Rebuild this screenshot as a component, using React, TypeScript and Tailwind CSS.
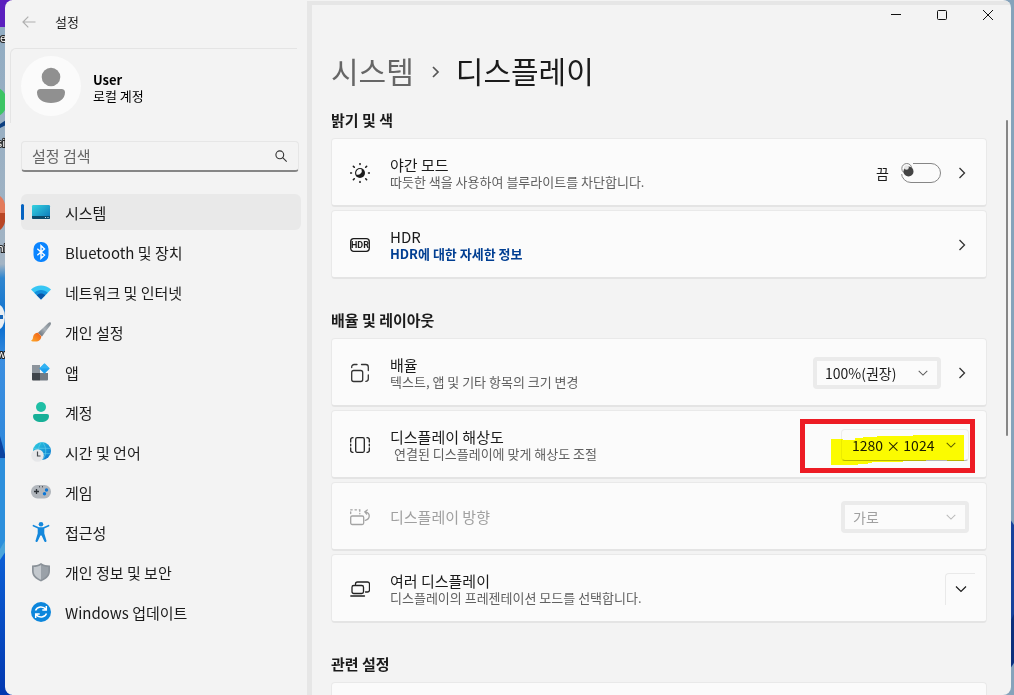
import type { ReactNode } from "react";

const navItems = [
  { id: "system", label: "시스템", icon: <SystemIcon /> },
  { id: "bluetooth", label: "Bluetooth 및 장치", icon: <BluetoothIcon /> },
  { id: "network", label: "네트워크 및 인터넷", icon: <NetworkIcon /> },
  { id: "personal", label: "개인 설정", icon: <BrushIcon /> },
  { id: "apps", label: "앱", icon: <AppsIcon /> },
  { id: "accounts", label: "계정", icon: <AccountIcon /> },
  { id: "time", label: "시간 및 언어", icon: <TimeIcon /> },
  { id: "gaming", label: "게임", icon: <GamingIcon /> },
  { id: "access", label: "접근성", icon: <AccessIcon /> },
  { id: "privacy", label: "개인 정보 및 보안", icon: <ShieldIcon /> },
  { id: "update", label: "Windows 업데이트", icon: <UpdateIcon /> },
];

function SystemIcon() {
  return (
    <svg viewBox="0 0 20 20" className="size-5">
      <defs>
        <linearGradient id="sys" x1="0" y1="0" x2="1" y2="1">
          <stop offset="0" stopColor="#35d3e0" />
          <stop offset="1" stopColor="#0b74b8" />
        </linearGradient>
      </defs>
      <rect x="1" y="3" width="18" height="14" rx="1.2" fill="url(#sys)" />
      <path d="M1 14h18v1.8a1.2 1.2 0 0 1-1.2 1.2H2.2A1.2 1.2 0 0 1 1 15.8z" fill="#0b4a6b" />
      <path d="M14 15.500h1M16.500 15.500h1" stroke="#cfe9f5" />
    </svg>
  );
}

function BluetoothIcon() {
  return (
    <svg viewBox="0 0 20 20" className="size-5">
      <rect x="2.500" y="0" width="15" height="20" rx="7" fill="#0a84ff" />
      <path d="M6.300 6.800l7.200 6.200-3.500 3.300V3.700l3.500 3.300-7.200 6.200" fill="none" stroke="#fff" strokeWidth="1.400" />
    </svg>
  );
}

function NetworkIcon() {
  return (
    <svg viewBox="0 0 20 20" className="size-5">
      <path d="M0 7.500C5.500 2 14.500 2 20 7.500L10 17.500z" fill="#37c6f4" />
      <path d="M3.300 10.800c3.700-3.700 9.700-3.700 13.400 0L10 17.500z" fill="#1391dd" />
      <path d="M5.800 13.300c2.300-2.300 6.100-2.300 8.400 0L10 17.500z" fill="#0a57a8" />
    </svg>
  );
}

function BrushIcon() {
  return (
    <svg viewBox="0 0 20 20" className="size-5">
      <defs>
        <linearGradient id="handle" x1="1" y1="0" x2="0" y2="1">
          <stop offset="0" stopColor="#7d868e" />
          <stop offset="0.500" stopColor="#a9b1b8" />
          <stop offset="1" stopColor="#5d656d" />
        </linearGradient>
        <linearGradient id="bristle" x1="0" y1="1" x2="1" y2="0">
          <stop offset="0" stopColor="#ffa928" />
          <stop offset="1" stopColor="#ee5a17" />
        </linearGradient>
      </defs>
      <path d="M19.600 0.500c.7.800.3 2-.4 3L11 14.500 7 10.800l10-9.500c.9-.8 1.900-1.400 2.600-.8z" fill="url(#handle)" />
      <path d="M7 10.800l3.300 3.400c.1 3-2.300 5.400-5.800 5.400-2 0-3.500-.2-4.500-.9 2.200-.8 1.700-2.500 2.300-4.600.6-2 2.500-3.500 4.700-3.300z" fill="url(#bristle)" />
    </svg>
  );
}

function AppsIcon() {
  return (
    <svg viewBox="0 0 20 20" className="size-5">
      <path d="M1 3h8v8H1z" fill="#8c949c" />
      <path d="M1 11h8v7.500H2a1 1 0 0 1-1-1z" fill="#3e444a" />
      <path d="M9 11h8v6.500a1 1 0 0 1-1 1H9z" fill="#737b83" />
      <rect x="9.700" y="2.700" width="7.600" height="7.600" rx="0.800" transform="rotate(45 13.500 6.500)" fill="#1ea1ee" />
      <path d="M13.500 1.200L8.300 6.500h10.400z" fill="#3fc0f7" opacity="0.600" />
    </svg>
  );
}

function AccountIcon() {
  return (
    <svg viewBox="0 0 20 20" className="size-5">
      <circle cx="10" cy="5" r="5" fill="#1fbfa5" />
      <path d="M4 12h12a2 2 0 0 1 2 2c0 4-3.500 6-8 6s-8-2-8-6a2 2 0 0 1 2-2z" fill="#17b098" />
    </svg>
  );
}

function TimeIcon() {
  return (
    <svg viewBox="0 0 20 20" className="size-5">
      <defs>
        <linearGradient id="globe" x1="0" y1="0" x2="1" y2="1">
          <stop offset="0" stopColor="#2fd0e0" />
          <stop offset="1" stopColor="#0a6fd0" />
        </linearGradient>
      </defs>
      <circle cx="11" cy="9" r="9" fill="url(#globe)" />
      <path d="M2.500 6.300h17M3 11.700h16.500M11 0c-5 4-5 14 0 18M11 0c5 4 5 14 0 18" fill="none" stroke="#5ccdea" strokeWidth="0.700" />
      <circle cx="6.500" cy="13.500" r="6.300" fill="#e6e7e9" />
      <path d="M6.500 9.500v4.500h3" fill="none" stroke="#43484d" strokeWidth="1.200" />
    </svg>
  );
}

function GamingIcon() {
  return (
    <svg viewBox="0 0 20 20" className="size-5">
      <rect x="0" y="3" width="20" height="13.500" rx="6.500" fill="#b1b6bc" />
      <path d="M5.500 7v5M3 9.500h5" stroke="#2b3036" strokeWidth="1.300" />
      <circle cx="15.500" cy="8" r="1.700" fill="#0b76d6" />
      <circle cx="13.500" cy="11.800" r="1.700" fill="#0b76d6" />
      <path d="M8 4.800h1M11 4.800h1" stroke="#2b3036" />
    </svg>
  );
}

function AccessIcon() {
  return (
    <svg viewBox="0 0 20 20" className="size-5" fill="#1488dc">
      <circle cx="10" cy="2.300" r="2.300" />
      <path d="M2.700 2.900l5.200 2.300h4.200l5.200-2.300c1.100-.3 1.500 1.200.5 1.700L13.300 6.600v5l2.200 7.200c.2 1.300-1.700 1.700-2.200.5L10.600 13.500h-1.200l-2.700 5.800c-.5 1.200-2.400.8-2.200-.5l2.200-7.200v-5L2.200 4.600c-1-.5-.6-2 .5-1.700z" />
    </svg>
  );
}

function ShieldIcon() {
  return (
    <svg viewBox="0 0 20 20" className="size-5">
      <path d="M10 1c2.700 1.800 5.500 2.500 9 2.500V9c0 5-3.500 8.200-9 10.500C4.500 17.200 1 14 1 9V3.500C4.500 3.500 7.300 2.800 10 1z" fill="#8b9299" />
      <path d="M10 3c2.300 1.400 4.700 2 7.300 2.100V9c0 4-2.800 6.600-7.300 8.700z" fill="#9aa1a8" />
      <path d="M10 3C7.700 4.400 5.300 5 2.700 5.100V9c0 4 2.800 6.600 7.300 8.700z" fill="#c3c8cd" />
    </svg>
  );
}

function UpdateIcon() {
  return (
    <svg viewBox="0 0 20 20" className="size-5">
      <circle cx="10" cy="10" r="10" fill="#0c86dc" />
      <path d="M4.500 8.500C6 4.500 12 3.500 15 7.500M15.300 4v4h-4M15.500 11.500c-1.500 4-7.500 5-10.500 1M4.700 16v-4h4" fill="none" stroke="#fff" strokeWidth="1.500" />
    </svg>
  );
}

function NightIcon() {
  return (
    <svg viewBox="0 0 20 20" className="size-5">
      <circle cx="10" cy="10" r="5" fill="#1b1b1b" />
      <path d="M11.500 6.300A4 4 0 0 1 6.300 11.500 4 4 0 0 1 11.500 6.300z" fill="#fbfbfb" />
      <path
        d="M10 .5v1M10 18.500v1M.5 10h1M18.500 10h1M3.400 3.400l.9.900M15.700 15.700l.9.900M3.400 16.600l.9-.9M15.700 4.300l.9-.9"
        stroke="#1b1b1b"
        strokeWidth="1.500"
        strokeLinecap="round"
      />
    </svg>
  );
}

function HdrIcon() {
  return (
    <svg viewBox="0 0 20 20" className="size-5">
      <rect x="0.700" y="3.700" width="18.600" height="12.600" rx="3" fill="none" stroke="#1b1b1b" strokeWidth="1.300" />
      <text x="10" y="13.200" textAnchor="middle" fontSize="9" fontWeight="700" fontFamily="Liberation Sans Narrow, Roboto, sans-serif" fill="#1b1b1b">
        HDR
      </text>
    </svg>
  );
}

function ScaleIcon() {
  return (
    <svg viewBox="0 0 20 20" className="size-5" fill="none" stroke="#333" strokeWidth="1.300" strokeLinecap="round">
      <rect x="1.700" y="7.500" width="11" height="11" rx="2" />
      <path d="M1.700 4.500V4a2.500 2.500 0 0 1 2.500-2.500H7M11.500 1.500h4.300A2.500 2.500 0 0 1 18.300 4v3.500M18.300 12v3.800a2.500 2.500 0 0 1-2.500 2.500" />
    </svg>
  );
}

function ResolutionIcon() {
  return (
    <svg viewBox="0 0 20 20" className="size-5" fill="none" stroke="#222" strokeWidth="1.300" strokeLinecap="round">
      <rect x="5.700" y="2.700" width="8.600" height="14.600" rx="1.500" />
      <path d="M3 2.700A2 2 0 0 0 .7 5v2M.7 9.200v1.600M.7 13v2A2 2 0 0 0 3 17.300M17 2.700A2 2 0 0 1 19.300 5v2M19.300 9.200v1.600M19.300 13v2a2 2 0 0 1-2.300 2.300" />
    </svg>
  );
}

function OrientationIcon() {
  return (
    <svg viewBox="0 0 20 20" className="size-5" fill="none" stroke="#a3a3a3" strokeWidth="1.300" strokeLinecap="round">
      <rect x="0.700" y="9" width="13" height="8.500" rx="1.500" />
      <path d="M.7 6.500V5M.7 2.800h1.500M5 2.800h1.500M9.300 2.800h.5v1.500M9.800 6.500v.3" />
      <path d="M15.300 13.300c5.200-1.300 5.200-7.300.2-8.500M17.300 3l-2.500 1.800 1.900 2.300" />
    </svg>
  );
}

function MultiDisplayIcon() {
  return (
    <svg viewBox="0 0 20 20" className="size-5" fill="none" stroke="#222" strokeWidth="1.300" strokeLinecap="round">
      <path d="M5.500 5.500V5a2 2 0 0 1 2-2h10a2 2 0 0 1 2 2v6a2 2 0 0 1-2 2h-2" />
      <rect x="2" y="6.500" width="11.500" height="8" rx="1.800" />
      <path d="M.8 17h13.700" />
    </svg>
  );
}

function ChevronRight() {
  return (
    <svg viewBox="0 0 14 14" className="size-3.5" fill="none" stroke="#333" strokeWidth="1.300">
      <path d="M4.500 2l5 5-5 5" />
    </svg>
  );
}

function ChevronDown({ className }: { className: string }) {
  return (
    <svg viewBox="0 0 14 14" className={className} fill="none" stroke="currentColor" strokeWidth="1.200">
      <path d="M2 4.500l5 5 5-5" />
    </svg>
  );
}

function Wallpaper() {
  return (
    <svg className="absolute inset-0 h-full w-full" viewBox="0 0 1014 695" preserveAspectRatio="none" aria-hidden="true">
      <defs>
        <linearGradient id="sky" x1="0" y1="0" x2="0" y2="1">
          <stop offset="0" stopColor="#8fabc2" />
          <stop offset="0.380" stopColor="#a3b4c4" />
          <stop offset="0.400" stopColor="#2f86cf" />
          <stop offset="0.470" stopColor="#0b6fd0" />
          <stop offset="0.520" stopColor="#3b8ee0" />
          <stop offset="0.700" stopColor="#2a86da" />
          <stop offset="0.780" stopColor="#0c62d8" />
          <stop offset="1" stopColor="#0238b0" />
        </linearGradient>
      </defs>
      <rect width="12" height="695" fill="url(#sky)" />
      <rect width="12" height="27" fill="#5b1fbe" />
      <ellipse cx="-6" cy="102" rx="13" ry="15" fill="#3cc564" />
      <path d="M0 124l6-4v5l-6 3z" fill="#0c3f80" />
      <path d="M0 196c4 3 6 9 6 17H0z" fill="#e37b5c" />
      <path d="M0 230c4-3 6-9 6-17H0z" fill="#b94625" />
      <ellipse cx="-3" cy="317" rx="8" ry="13" fill="#e9eef2" />
      <path d="M0 315h3v4H0z" fill="#1565b8" />
      <path d="M0 436l6 22H0z" fill="#0b43a0" />
      <path d="M0 460l6-2v84l-6 12z" fill="#2c8fdc" />
      <path d="M0 549l6-10v12l-6 9z" fill="#4aa5dc" />
      <g fontSize="11" fontFamily="Noto Sans CJK KR, sans-serif" fill="#fff" stroke="#222" strokeWidth="2" paintOrder="stroke">
        <text x="0" y="42">e</text>
        <text x="-3" y="147">si</text>
        <text x="-3" y="252">ni</text>
        <text x="-3" y="358">w</text>
      </g>
      <rect x="1000" width="14" height="695" fill="#86a3bb" />
      <path d="M1010 519l4 6v138l-4 6z" fill="#17429c" />
      <path d="M1010 622l4-8v48l-4 6z" fill="#0b2f7c" />
    </svg>
  );
}

function Sidebar() {
  return (
    <aside className="w-[302px] shrink-0">
      <div className="flex h-12 items-center gap-[19px] pb-1 pl-[17px]">
        <button type="button" aria-label="뒤로" className="text-[#b0b0b0]">
          <svg viewBox="0 0 14 14" className="size-3.5" fill="none" stroke="currentColor" strokeWidth="1.200">
            <path d="M13.500 7H1M6.300 1.700L1 7l5.300 5.300" />
          </svg>
        </button>
        <span className="text-[13px] leading-4">설정</span>
      </div>

      <div className="mr-2.5 ml-[5px] flex h-[75px] gap-3 rounded-tl-md border-t border-l border-[#e4e4e4] pt-[7px] pl-2.5">
        <svg viewBox="0 0 60 60" className="size-[60px]" aria-hidden="true">
          <circle cx="30" cy="30" r="30" fill="#fbfbfb" />
          <circle cx="30" cy="21" r="9.300" fill="#909090" />
          <path d="M19.500 33h21a3.500 3.500 0 0 1 3.500 3.500C44 43 38 47 30 47s-14-4-14-10.500a3.500 3.500 0 0 1 3.500-3.500z" fill="#909090" />
        </svg>
        <div className="flex flex-col justify-center pb-1 text-[13px] leading-4 text-black">
          <strong className="font-bold">User</strong>
          <span>로컬 계정</span>
        </div>
      </div>

      <label className="mt-[18px] mr-2 ml-4 flex h-[31px] items-center rounded border border-b-2 border-[#e6e6e6] border-b-[#868686] px-2.5">
        <input
          type="search"
          aria-label="설정 검색"
          placeholder="설정 검색"
          className="min-w-0 flex-1 bg-transparent text-[15px] leading-5 outline-none placeholder:text-[#666]"
        />
        <svg viewBox="0 0 14 14" className="size-3.5" fill="none" stroke="#333" strokeWidth="1.100">
          <circle cx="5.800" cy="5.800" r="3.900" />
          <path d="M8.700 8.700l4 4" />
        </svg>
      </label>

      <nav className="mt-[22px] mr-1.5 ml-4 flex flex-col gap-1">
        {navItems.map((item) => (
          <a
            key={item.id}
            href={`#${item.id}`}
            className={`relative flex h-9 items-center gap-3.5 rounded-md pl-2.5 text-[15px] leading-5 ${item.id === "system" ? "bg-[#e9e9e9]" : ""}`}
          >
            {item.id === "system" && <span className="absolute top-2.5 left-0 h-4 w-[3px] rounded-full bg-[#0563c1]" />}
            {item.icon}
            <span className="pt-0.5">{item.label}</span>
          </a>
        ))}
      </nav>
    </aside>
  );
}

type CardProps = {
  icon: ReactNode;
  title: string;
  detail?: ReactNode;
  disabled?: boolean;
  children?: ReactNode;
};

function Card({ icon, title, detail, disabled, children }: CardProps) {
  return (
    <div className="flex h-[69px] items-center gap-5 rounded border border-b-2 border-[#e9e9e9] border-b-[#e4e4e4] bg-[#fbfbfb] pt-px pr-[17px] pl-[18px]">
      {icon}
      <div className="flex flex-1 flex-col items-start">
        <h3 className={`text-[15px] leading-[18px] ${disabled ? "text-[#a0a0a0]" : ""}`}>{title}</h3>
        {detail && <div className="text-[13px] leading-4 text-[#606060]">{detail}</div>}
      </div>
      <div className="flex items-center gap-3.5">{children}</div>
    </div>
  );
}

function Section({ title, children }: { title: string; children: ReactNode }) {
  return (
    <section className="mb-[31px] shrink-0">
      <h2 className="mb-2 text-[15px] leading-5 font-bold">{title}</h2>
      <div className="flex flex-col gap-[3px]">{children}</div>
    </section>
  );
}

type DropdownProps = { label: string; value: string; disabled?: boolean; plain?: boolean };

function Dropdown({ label, value, disabled, plain }: DropdownProps) {
  return (
    <div className={`relative w-32 ${disabled ? "text-[#a0a0a0]" : "text-[#1b1b1b]"}`}>
      <select
        aria-label={label}
        disabled={disabled}
        className={`block h-8 w-full appearance-none rounded text-sm leading-5 opacity-100 ${plain ? "border border-[#ececec] border-b-[#b5b5b5] pl-2.5" : "border-4 border-[#ebebeb] pl-2"}`}
      >
        <option>{value}</option>
      </select>
      <ChevronDown className="pointer-events-none absolute top-2.5 right-3 size-3 opacity-70" />
    </div>
  );
}

function NextButton({ label }: { label: string }) {
  return (
    <button type="button" aria-label={label}>
      <ChevronRight />
    </button>
  );
}

export default function App() {
  return (
    <div className="relative flex h-screen overflow-hidden pr-[3px] pl-[5px] font-['Noto_Sans_CJK_KR',sans-serif] text-[#1b1b1b]">
      <Wallpaper />
      <div className="relative flex flex-1 overflow-hidden rounded-lg bg-[#f3f3f3]">
        <Sidebar />

        <main className="relative mt-px flex min-w-0 flex-1 flex-col border-t-4 border-l-[5px] border-[#e6e6e6] pr-6 pl-[19px]">
          <div className="-mr-2 flex h-5 shrink-0 items-center justify-end gap-8">
            <button type="button" aria-label="최소화">
              <svg viewBox="0 0 14 14" className="size-3.5" stroke="#111" fill="none">
                <path d="M2 6.500h10" />
              </svg>
            </button>
            <button type="button" aria-label="최대화">
              <svg viewBox="0 0 14 14" className="size-3.5" stroke="#111" fill="none">
                <rect x="2.500" y="2.500" width="9" height="9" rx="1" />
              </svg>
            </button>
            <button type="button" aria-label="닫기">
              <svg viewBox="0 0 14 14" className="size-3.5" stroke="#111" fill="none">
                <path d="M2 2l10 10M12 2L2 12" />
              </svg>
            </button>
          </div>

          <h1 className="mt-6 mb-[19px] flex shrink-0 items-center gap-3.5 text-[30px] leading-[42px]">
            <a href="#system" className="text-[#666]">
              시스템
            </a>
            <svg viewBox="0 0 14 14" className="mt-1 size-3.5" fill="none" stroke="#555" strokeWidth="1.700" aria-hidden="true">
              <path d="M5 2l5 5-5 5" />
            </svg>
            <span>디스플레이</span>
          </h1>

          <Section title="밝기 및 색">
            <Card icon={<NightIcon />} title="야간 모드" detail="따듯한 색을 사용하여 블루라이트를 차단합니다.">
              <label className="flex items-center gap-3 text-sm">
                끔
                <span className="relative flex">
                  <input type="checkbox" role="switch" className="h-5 w-10 appearance-none rounded-full border border-[#868686]" />
                  {/* thumb */}
                  <svg viewBox="0 0 14 20" className="pointer-events-none absolute top-0 left-0 h-5 w-3.5">
                    <path d="M0 0h12v11H0z" fill="#fbfbfb" />
                    <circle cx="5.800" cy="5.500" r="5" fill="none" stroke="#868686" />
                    <circle cx="7.500" cy="8.500" r="5" fill="#444" />
                    <circle cx="5.500" cy="4.500" r="2.300" fill="#e4e4e4" />
                  </svg>
                </span>
              </label>
              <NextButton label="야간 모드" />
            </Card>
            <Card
              icon={<HdrIcon />}
              title="HDR"
              detail={
                <a href="#hdr" className="font-bold text-[#003e92]">
                  HDR에 대한 자세한 정보
                </a>
              }
            >
              <NextButton label="HDR" />
            </Card>
          </Section>

          <Section title="배율 및 레이아웃">
            <Card icon={<ScaleIcon />} title="배율" detail="텍스트, 앱 및 기타 항목의 크기 변경">
              <Dropdown label="배율" value="100%(권장)" />
              <NextButton label="배율" />
            </Card>
            <Card
              icon={<ResolutionIcon />}
              title="디스플레이 해상도"
              detail={<span className="pl-1">연결된 디스플레이에 맞게 해상도 조절</span>}
            >
              <div className="relative">
                <Dropdown label="디스플레이 해상도" value="1280 × 1024" plain />
                {/* highlighter stroke and red frame over the resolution */}
                <svg viewBox="0 0 133 30" className="pointer-events-none absolute top-1.5 -left-2.5 h-[30px] w-[133px] mix-blend-multiply">
                  <path d="M0 4h12v1h12V3h8V2h14V1h36V0h51v26h-17v-1H95v1H72v1H41v1H37v1H27v1H0z" fill="#ffff00" />
                </svg>
                <div className="pointer-events-none absolute -top-2.5 -left-[41px] h-[54px] w-[175px] border-[5px] border-[#ed1c24]" />
              </div>
            </Card>
            <Card icon={<OrientationIcon />} title="디스플레이 방향" disabled>
              <Dropdown label="디스플레이 방향" value="가로" disabled />
            </Card>
            <Card icon={<MultiDisplayIcon />} title="여러 디스플레이" detail="디스플레이의 프레젠테이션 모드를 선택합니다.">
              <button
                type="button"
                aria-label="여러 디스플레이 펼치기"
                className="-mr-1.5 flex h-8 w-[30px] items-center justify-center rounded-tl border-t border-l border-[#e9e9e9]"
              >
                <ChevronDown className="size-3.5" />
              </button>
            </Card>
          </Section>

          <Section title="관련 설정">
            <Card icon={<MultiDisplayIcon />} title="고급 디스플레이" />
          </Section>

          <div className="absolute top-[115px] right-[3px] h-[316px] w-0.5 rounded-full bg-[#868686]" />
        </main>
      </div>
    </div>
  );
}
